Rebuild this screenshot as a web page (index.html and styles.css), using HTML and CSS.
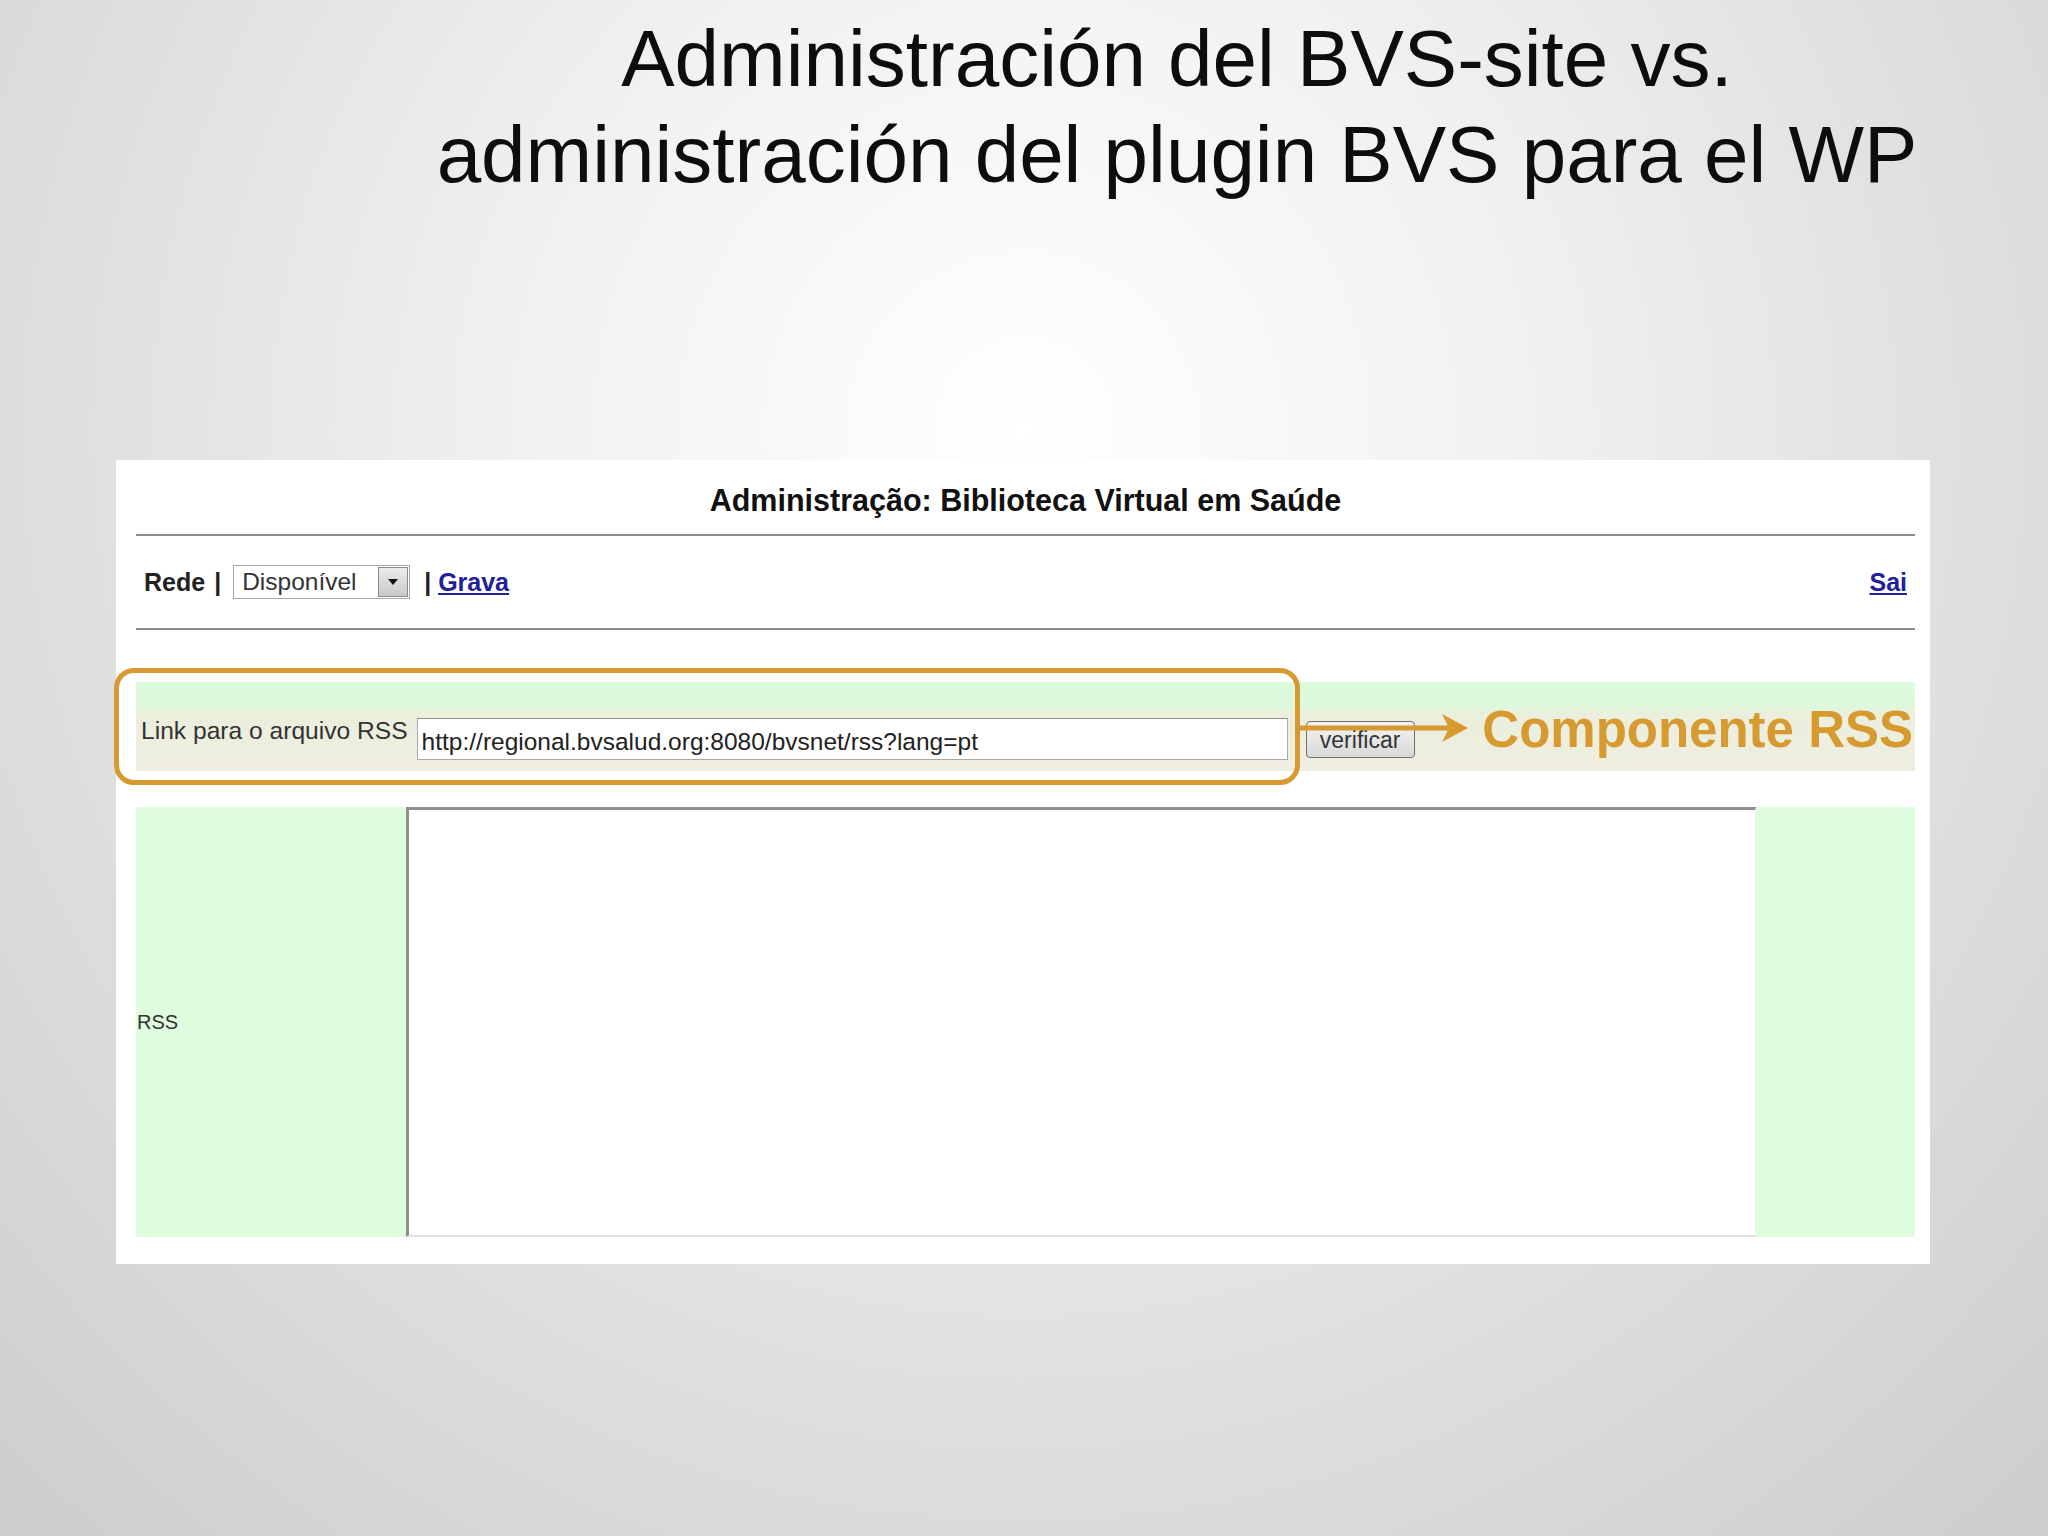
FILE: index.html
```html
<!DOCTYPE html>
<html lang="es">

<head>
  <meta charset="UTF-8">
  <meta name="viewport" content="width=device-width, initial-scale=1.0">
  <title>Administración del BVS-site vs. administración del plugin BVS para el WP</title>
  <link rel="stylesheet" href="styles.css">
</head>

<body>
  <header class="slide-title">
    <h1>Administración del BVS-site vs.<br>administración del plugin BVS para el WP</h1>
  </header>

  <!-- screenshot of the BVS-site admin -->
  <main class="panel">
    <h2 class="admin-title">Administração: Biblioteca Virtual em Saúde</h2>

    <div class="toolbar">
      <div class="toolbar-left">
        <b>Rede</b><span class="sep">|</span>
        <span class="select">
          <span class="select-value">Disponível</span>
          <span class="select-btn">
            <svg width="10" height="6" viewBox="0 0 10 6"><polygon points="0,0 10,0 5,6" fill="#111" /></svg>
          </span>
        </span>
        <span class="sep sep-after">|</span><a href="#" class="link">Grava</a>
      </div>
      <a href="#" class="link">Sai</a>
    </div>

    <div class="rss-row">
      <label class="rss-label" for="rss-url">Link para o arquivo RSS</label>
      <input id="rss-url" class="rss-input" type="text" value="http://regional.bvsalud.org:8080/bvsnet/rss?lang=pt">
      <button class="btn-verify">verificar</button>
      <span class="callout">Componente RSS</span>

      <!-- annotation overlay -->
      <div class="highlight"></div>
      <svg class="arrow" width="168" height="30" viewBox="0 0 168 30">
        <line x1="0" y1="15" x2="150" y2="15" stroke="#d69a30" stroke-width="5" />
        <polygon points="142,1 168,15 142,29 149,15" fill="#d69a30" />
      </svg>
    </div>

    <div class="rss-area">
      <div class="rss-area-label">RSS</div>
      <textarea class="rss-text" readonly></textarea>
      <div class="rss-area-fill"></div>
    </div>
  </main>
</body>

</html>
```

FILE: styles.css
```css
body {
  margin: 0;
  width: 2048px;
  height: 1536px;
  overflow: hidden;
  font-family: 'Liberation Sans', Arial, sans-serif;
  color: #000;
  background: radial-gradient(ellipse 70% 95% at 50% 28%, #ffffff 0%, #f1f1f1 35%, #e0e0e0 65%, #cfcfcf 100%);
}

.slide-title {
  padding: 11px 0 0 306px;
  text-align: center;
}

.slide-title h1 {
  margin: 0;
  font-size: 80px;
  font-weight: normal;
  line-height: 96px;
  color: #0d0d0d;
}

.panel {
  margin: 257px 0 0 116px;
  width: 1814px;
  box-sizing: border-box;
  padding: 0 15px 27px 20px;
  background-color: #fff;
}

.admin-title {
  margin: 0;
  padding: 23px 0 17px;
  font-size: 30.5px;
  line-height: 34px;
  text-align: center;
  color: #111;
  border-bottom: 2px solid #8c8c8c;
}

.toolbar {
  height: 92px;
  display: flex;
  align-items: center;
  justify-content: space-between;
  padding: 0 8px;
  border-bottom: 2px solid #8c8c8c;
  font-size: 25px;
  color: #222;
}

.toolbar-left {
  display: flex;
  align-items: center;
}

.sep {
  margin: 0 12px 0 9px;
  font-weight: bold;
}

.sep-after {
  margin: 0 7px 0 14px;
}

.link {
  color: #20209a;
  font-weight: bold;
  text-decoration: underline;
}

.select {
  display: flex;
  align-items: center;
  width: 177px;
  height: 34px;
  box-sizing: border-box;
  border: 1px solid #a8a8a8;
  background-color: #fff;
  font-size: 24.5px;
  color: #333;
}

.select-value {
  flex: 1;
  padding-left: 8px;
}

.select-btn {
  width: 30px;
  height: 30px;
  margin-right: 1px;
  box-sizing: border-box;
  border: 1px solid #8a8a8a;
  background: linear-gradient(#ececec, #c9c9c9);
  display: flex;
  align-items: center;
  justify-content: center;
}

.rss-row {
  position: relative;
  margin-top: 52px;
  height: 89px;
  box-sizing: border-box;
  padding: 25px 2px 0 5px;
  display: flex;
  align-items: center;
  background: linear-gradient(#dcfbdc 0%, #def8dc 28%, #ebefdc 36%, #efeee1 100%);
}

.rss-label {
  margin-bottom: 16px;
  font-size: 24.6px;
  color: #333;
}

.rss-input {
  margin-left: 9px;
  width: 871px;
  height: 42px;
  box-sizing: border-box;
  padding: 6px 4px 0;
  border: 1px solid #a9a9a9;
  border-top-color: #8e8e8e;
  font-family: 'Liberation Sans', Arial, sans-serif;
  font-size: 24.5px;
  color: #222;
  background-color: #fff;
}

.btn-verify {
  margin-left: 18px;
  width: 109px;
  height: 37px;
  border: 1px solid #707070;
  border-radius: 4px;
  background: linear-gradient(#f4f4f4, #d9d9d9);
  font-family: 'Liberation Sans', Arial, sans-serif;
  font-size: 23px;
  color: #333;
  padding: 2px 0 0;
}

.callout {
  margin: 0 0 20px auto;
  font-size: 51px;
  font-weight: bold;
  color: #d69a30;
}

.highlight {
  position: absolute;
  left: -22px;
  top: -14px;
  width: 1186px;
  height: 117px;
  box-sizing: border-box;
  border: 5px solid #d69a30;
  border-radius: 20px;
}

.arrow {
  position: absolute;
  left: 1164px;
  top: 31px;
}

.rss-area {
  margin-top: 36px;
  height: 430px;
  display: flex;
  background-color: #defcde;
}

.rss-area-label {
  width: 269px;
  padding-left: 1px;
  display: flex;
  align-items: center;
  font-size: 20px;
  color: #333;
}

.rss-text {
  width: 1350px;
  height: 430px;
  box-sizing: border-box;
  margin: 0;
  border-style: solid;
  border-width: 3px 1px 2px 3px;
  border-color: #8f8f8f #f0f0f0 #e2e2e2 #8f8f8f;
  background-color: #fff;
  resize: none;
}

.rss-area-fill {
  flex: 1;
}
```
